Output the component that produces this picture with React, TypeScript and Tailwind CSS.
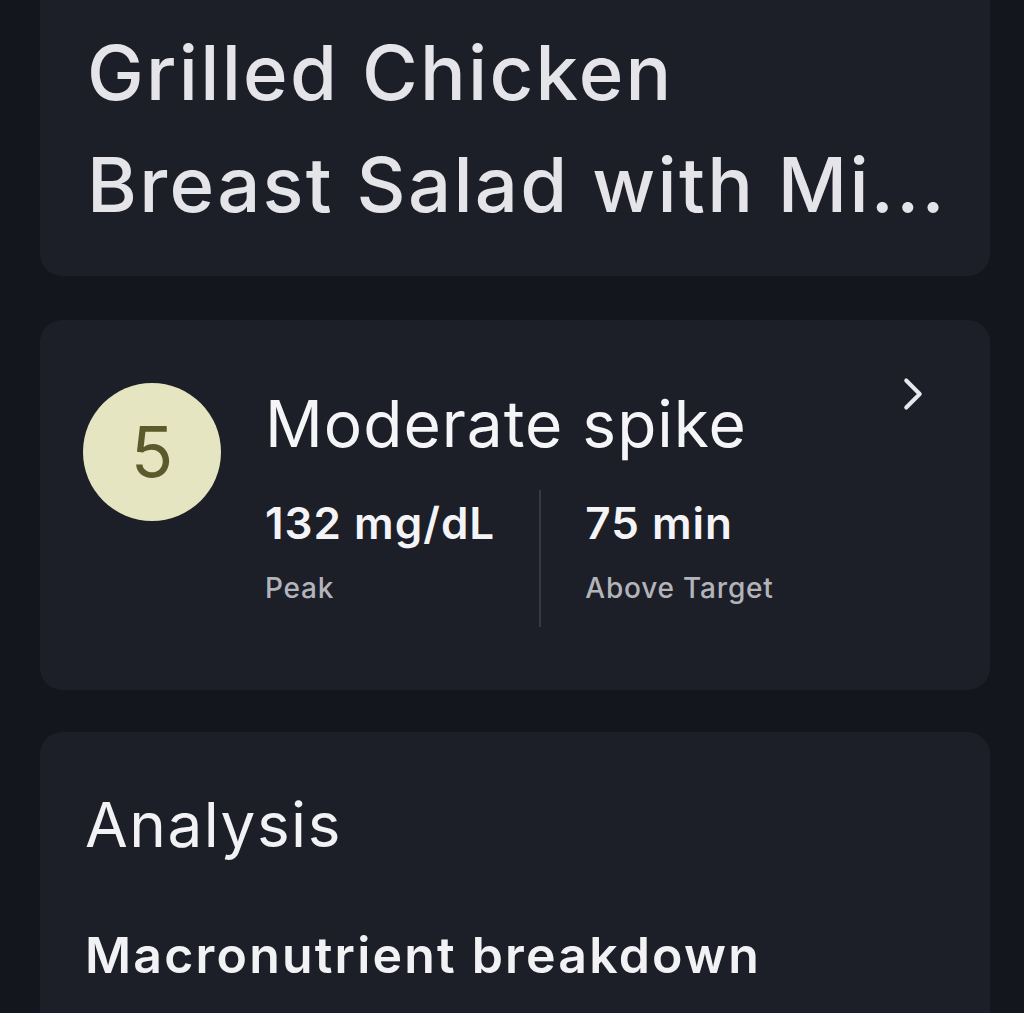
import * as React from 'react';
import { ChevronRight } from 'lucide-react';

const Stat: React.FC<{ value: string; label: string }> = ({ value, label }) => {
  return (
    <div className="flex flex-col pt-[7px] pb-[22px]">
      <div className="text-[44px] leading-[53px] font-semibold tracking-[1px] text-[#f4f4f6]">{value}</div>
      <div className="mt-[21px] text-[28px] leading-[34px] font-medium tracking-[0.8px] text-[#b3b4ba]">{label}</div>
    </div>
  );
};

const App: React.FC = () => {
  return (
    <div
      className="min-h-screen w-full bg-[#13161d] pl-[40px] pr-[34px] overflow-hidden"
      style={{ fontFamily: 'Inter, "Noto Sans", sans-serif' }}
    >
      <div className="-mt-[20px] rounded-[22px] bg-[#1c1f28] pl-[47px] pr-[30px] pt-[36px] pb-[36px]">
        <h1 className="text-[76px] leading-[112px] font-medium text-[#e4e4e9] tracking-[2.3px] whitespace-nowrap">
          <span className="block">Grilled Chicken</span>
          <span className="block">Breast Salad with Mi...</span>
        </h1>
      </div>

      <div className="mt-[44px] flex items-start rounded-[22px] bg-[#1c1f28] pl-[43px] pr-[50px] pt-[47px] pb-[63px]">
        <div className="mt-[16px] flex h-[138px] w-[138px] shrink-0 items-center justify-center rounded-full bg-[#e6e5c2]">
          <span className="text-[70px] leading-none text-[#5b5a2b]">5</span>
        </div>
        <div className="ml-[44px] mt-[18px] flex flex-1 flex-col">
          <div className="text-[64px] leading-[77px] font-normal text-[#f5f5f7] tracking-[1px]">Moderate spike</div>
          <div className="mt-[28px] flex items-stretch">
            <Stat value="132 mg/dL" label="Peak" />
            <div className="mx-[44px] w-[2px] bg-[#363941]" />
            <Stat value="75 min" label="Above Target" />
          </div>
        </div>
        <ChevronRight size={54} strokeWidth={1.8} className="shrink-0 text-[#e8e8ec]" />
      </div>

      <div className="mt-[42px] rounded-[22px] bg-[#1c1f28] px-[45px] pt-[56px] pb-[40px]">
        <h2 className="text-[62px] leading-[74px] font-normal tracking-[1.5px] text-[#f2f2f5]">Analysis</h2>
        <h3 className="mt-[63px] text-[50px] leading-[60px] font-semibold tracking-[2.2px] text-[#f2f2f5]">
          Macronutrient breakdown
        </h3>
        <div className="h-[200px]" />
      </div>
    </div>
  );
};

export default App;
